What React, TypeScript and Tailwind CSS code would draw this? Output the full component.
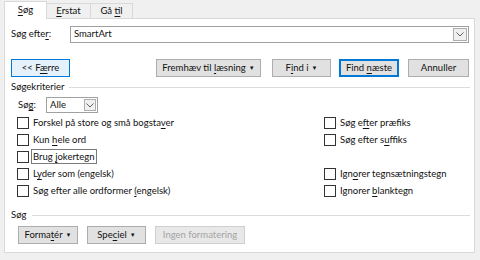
import React from 'react';

const font = { fontFamily: 'Lato, "Noto Sans", sans-serif' };

// text with one access-key letter underlined
const Ak = ({ pre, k, post }: { pre?: string; k: string; post?: string }) => (
  <span className="whitespace-nowrap">
    {pre}
    <span className="underline underline-offset-[2px]">{k}</span>
    {post}
  </span>
);

const Caret = () => <span className="ml-[3px] text-[6px] leading-none">▼</span>;

const Btn = ({
  children,
  w,
  variant = 'normal',
}: {
  children: React.ReactNode;
  w: string;
  variant?: 'normal' | 'default' | 'hot' | 'disabled';
}) => {
  const cls =
    variant === 'default'
      ? 'border-[#0078d7] bg-[#e1e1e1] shadow-[inset_0_0_0_1px_#0078d7] text-[#111]'
      : variant === 'hot'
      ? 'border-[#0078d7] bg-[#e5f1fb] text-[#111]'
      : variant === 'disabled'
      ? 'border-[#cfcfcf] bg-[#e8e8e8] text-[#a3a3a3]'
      : 'border-[#adadad] bg-[#e1e1e1] text-[#111]';
  return (
    <div className={`${w} h-[18px] border ${cls} flex items-center justify-center text-[9.5px] leading-none whitespace-nowrap`}>
      {children}
    </div>
  );
};

const Check = ({ children }: { children?: React.ReactNode }) => (
  <div className="h-[17px] flex items-center">
    {children && (
      <>
        <div className="w-[12px] h-[12px] border border-[#333333] bg-white shrink-0" />
        <div className="ml-[4px] text-[9.5px] text-[#111] leading-none whitespace-nowrap">{children}</div>
      </>
    )}
  </div>
);

const Chevron = () => (
  <svg width="8" height="5" viewBox="0 0 8 5" fill="none">
    <path d="M0.5 0.5 L4 4 L7.5 0.5" stroke="#606060" strokeWidth="1" />
  </svg>
);

export default function App() {
  return (
    <div className="w-[480px] h-[260px] bg-[#f0f0f0] pt-[1px] pl-[4px] overflow-hidden" style={font}>
      {/* tabs */}
      <div className="flex items-end h-[17px] text-[9.5px] text-[#111]">
        <div className="w-[43px] h-[18px] bg-white border border-b-0 border-[#d9d9d9] flex items-center justify-center relative z-10 -mb-[1px]">
          <Ak k="S" post="øg" />
        </div>
        <div className="w-[44px] h-[15px] bg-[#f0f0f0] border border-b-0 border-l-0 border-[#d9d9d9] flex items-center justify-center">
          <Ak k="E" post="rstat" />
        </div>
        <div className="w-[42px] h-[15px] bg-[#f0f0f0] border border-b-0 border-l-0 border-[#d9d9d9] flex items-center justify-center">
          <Ak pre="Gå " k="t" post="il" />
        </div>
      </div>

      {/* panel */}
      <div className="w-[471px] h-[235px] bg-white border border-[#d9d9d9] text-[9.5px] text-[#111]">
        {/* søg efter */}
        <div className="flex items-center mt-[7px] h-[17px]">
          <div className="w-[65px] pl-[6px]">
            <Ak pre="Søg efte" k="r" post=":" />
          </div>
          <div className="w-[399px] h-[17px] border border-[#a0a0a0] flex items-center justify-between pl-[3px] pr-[1px]">
            <span>SmartArt</span>
            <div className="w-[14px] h-[13px] border border-[#adadad] bg-[#f0f0f0] flex items-center justify-center">
              <Chevron />
            </div>
          </div>
        </div>

        {/* buttons */}
        <div className="flex items-center mt-[16px] pl-[6px]">
          <Btn w="w-[59px]" variant="hot">
            <span>{'<< F'}<span className="underline underline-offset-[2px]">æ</span>rre</span>
          </Btn>
          <div className="ml-[86px]">
            <Btn w="w-[105px]">
              <Ak pre="Fremhæv til " k="l" post="æsning" />
              <Caret />
            </Btn>
          </div>
          <div className="ml-[11px]">
            <Btn w="w-[59px]">
              <Ak pre="F" k="i" post="nd i" />
              <Caret />
            </Btn>
          </div>
          <div className="ml-[8px]">
            <Btn w="w-[60px]" variant="default">
              <Ak pre="Find " k="n" post="æste" />
            </Btn>
          </div>
          <div className="ml-[9px]">
            <Btn w="w-[61px]">Annuller</Btn>
          </div>
        </div>

        {/* søgekriterier */}
        <div className="flex items-center mt-[4px] pl-[6px] pr-[4px] h-[12px]">
          <span>Søgekriterier</span>
          <div className="flex-1 h-px bg-[#dcdcdc] ml-[4px]" />
        </div>

        <div className="flex items-center mt-[4px] pl-[13px] h-[16px]">
          <span className="w-[28px]">
            <Ak pre="Sø" k="g" post=":" />
          </span>
          <div className="w-[52px] h-[16px] border border-[#a0a0a0] flex items-center justify-between pl-[3px] pr-[1px]">
            <span>Alle</span>
            <div className="w-[12px] h-[12px] border border-[#adadad] bg-[#f0f0f0] flex items-center justify-center">
              <Chevron />
            </div>
          </div>
        </div>

        <div className="grid grid-cols-[307px_1fr] pl-[12px] mt-[1px]">
          <div className="flex flex-col">
            <Check>
              <Ak pre="Forskel på store og små bogsta" k="v" post="er" />
            </Check>
            <Check>
              <Ak pre="Kun " k="h" post="ele ord" />
            </Check>
            <Check>
              <span className="border border-[#7a7a7a] px-[1px] py-[1px] -ml-[2px]">
                <Ak pre="Brug " k="j" post="okertegn" />
              </span>
            </Check>
            <Check>
              <Ak pre="L" k="y" post="der som (engelsk)" />
            </Check>
            <Check>
              <Ak pre="Søg efter alle ordformer " k="(" post="engelsk)" />
            </Check>
          </div>
          <div className="flex flex-col">
            <Check>
              <Ak pre="Søg e" k="f" post="ter præfiks" />
            </Check>
            <Check>
              <Ak pre="Søg efter s" k="u" post="ffiks" />
            </Check>
            <Check />
            <Check>
              <Ak pre="Ign" k="o" post="rer tegnsætningstegn" />
            </Check>
            <Check>
              <Ak pre="Ignorer " k="b" post="lanktegn" />
            </Check>
          </div>
        </div>

        {/* søg bottom */}
        <div className="flex items-center mt-[10px] pl-[6px] pr-[4px] h-[12px]">
          <span>Søg</span>
          <div className="flex-1 h-px bg-[#dcdcdc] ml-[6px]" />
        </div>
        <div className="flex items-center gap-[9px] mt-[5px] pl-[13px]">
          <Btn w="w-[60px]">
            <Ak pre="Forma" k="t" post="ér" />
            <Caret />
          </Btn>
          <Btn w="w-[59px]">
            <Ak pre="Spe" k="c" post="iel" />
            <Caret />
          </Btn>
          <Btn w="w-[90px]" variant="disabled">
            Ingen formatering
          </Btn>
        </div>
      </div>
    </div>
  );
}
